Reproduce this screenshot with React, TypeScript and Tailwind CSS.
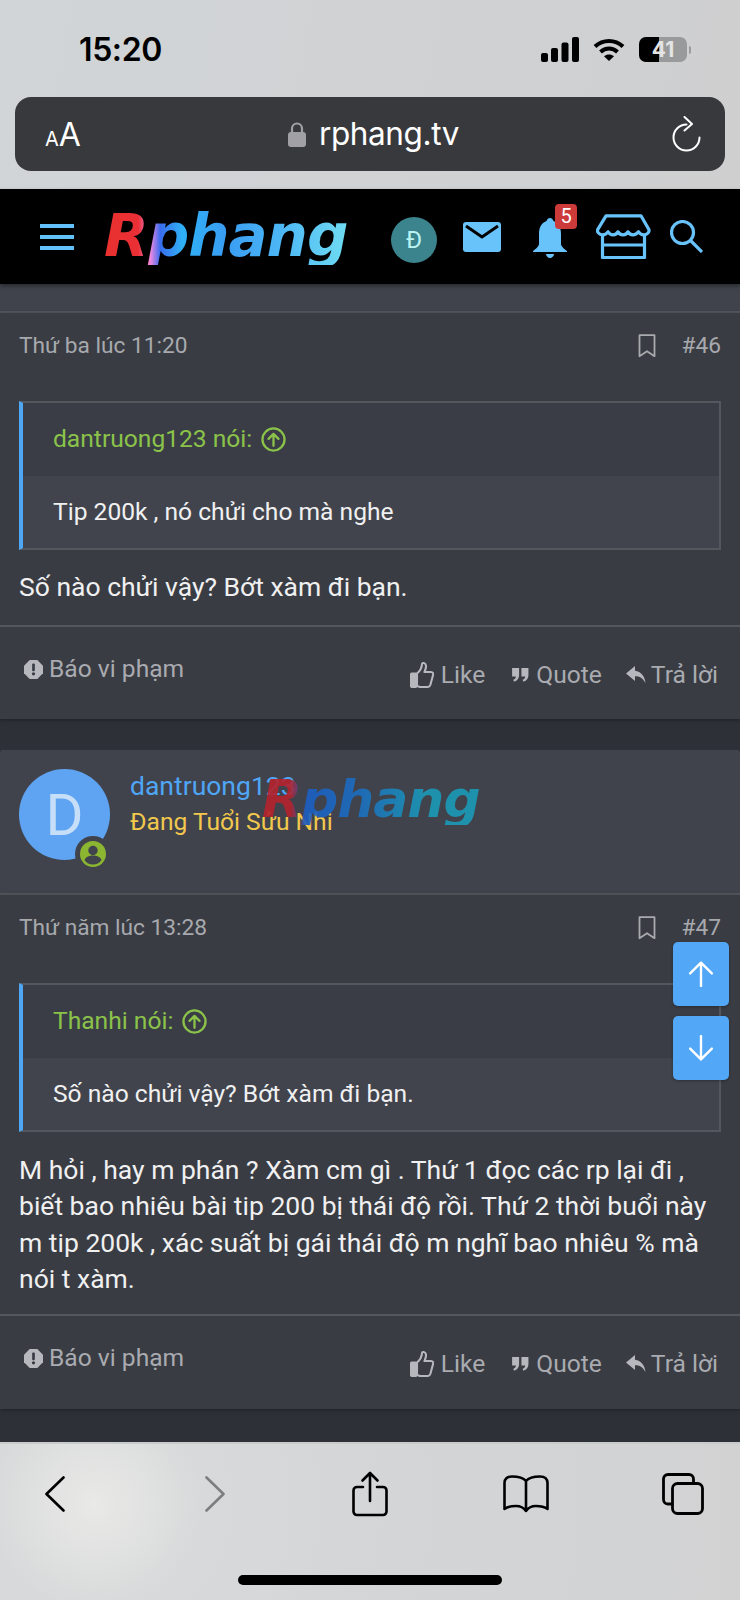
import React from "react";

function Logo({ dim }: { dim?: boolean }) {
  return (
    <span
      className={
        "block whitespace-nowrap font-['DejaVu_Sans',sans-serif] font-bold italic leading-none bg-clip-text text-transparent " +
        (dim
          ? "text-[52px] tracking-[-1px] bg-[linear-gradient(90deg,#b5222c_0%,#b5222c_13%,#1c5fc4_20%,#1c6fc0_45%,#1b9ab8_75%,#1b9ab8_100%)]"
          : "text-[58px] tracking-[-1px] bg-[linear-gradient(90deg,#e9312f_0%,#ea2f35_14%,#f08ae0_19%,#3a6cf0_23%,#2fb0f5_32%,#3a9df2_50%,#4ab4f5_70%,#6fdcf2_100%)]")
      }
    >
      Rphang
    </span>
  );
}

function QuoteCircle({ className }: { className?: string }) {
  return (
    <svg viewBox="0 0 24 24" className={className} fill="none" stroke="currentColor" strokeWidth="2.2" strokeLinecap="round" strokeLinejoin="round">
      <circle cx="12" cy="12" r="10.6" />
      <path d="M12 18V6.8M7.2 11.4 12 6.6l4.8 4.8" />
    </svg>
  );
}

function Bookmark() {
  return (
    <svg viewBox="0 0 18 24" className="w-[18px] h-[24px] text-[#a9aaae]" fill="none" stroke="currentColor" strokeWidth="1.8" strokeLinejoin="round">
      <path d="M1.5 1.2h15v21L9 17.2l-7.5 5z" />
    </svg>
  );
}

function Meta({ date, num }: { date: string; num: string }) {
  return (
    <div className="h-[66px] px-[19px] flex items-center justify-between text-[22.7px] text-[#a7a9ad]">
      <span>{date}</span>
      <div className="flex items-center">
        <Bookmark />
        <span className="ml-[26px]">{num}</span>
      </div>
    </div>
  );
}

function Quote({ author, text }: { author: string; text: string }) {
  return (
    <div className="mx-[19px] mt-[22px] h-[149px] border-2 border-l-4 border-[#54575d] border-l-[#4fa6f5] flex flex-col">
      <div className="h-[73px] bg-[#3a3d45] pl-[30px] flex items-center gap-[9px] text-[24.6px] text-[#8bc34a]">
        <span>{author} nói:</span>
        <QuoteCircle className="w-[25px] h-[25px]" />
      </div>
      <div className="flex-1 bg-[#41444c] pl-[30px] flex items-center text-[24.6px] text-[#f0f0f1]">{text}</div>
    </div>
  );
}

function ActionBar({ h }: { h: string }) {
  return (
    <div className={"border-t-2 border-[#54575d] px-[24px] flex justify-between text-[#a9abb0] text-[24.6px] " + h}>
      <div className="flex items-center gap-[6px] h-[84px]">
        <svg viewBox="0 0 20 20" className="w-[19px] h-[19px]" fill="#b6b8bd">
          <path d="M6 0h8l6 6v8l-6 6H6l-6-6V6z" />
          <rect x="8.6" y="3.8" width="2.8" height="8" rx="1" fill="#383b43" />
          <circle cx="10" cy="14.6" r="1.7" fill="#383b43" />
        </svg>
        <span>Báo vi phạm</span>
      </div>
      <div className="flex items-center h-[96px] mr-[-2px]">
        <svg viewBox="0 0 24 26" className="w-[24px] h-[26px]" fill="none" stroke="#b6b8bd" strokeWidth="2.1" strokeLinejoin="round">
          <path d="M7 11.5c3-2.5 4.8-5.5 5-9.5 0-1.5 3.6-1.6 4 1.6.3 2.4-.8 4.5-1.6 6.4H21c1.9 0 2.7 1.8 2 3.3l-2.6 9.4c-.5 1.6-1.6 2.3-3 2.3H10.5C9 25 7 24 7 23z" />
          <rect x="1" y="11.5" width="5.6" height="13.5" rx="1" fill="#b6b8bd" />
        </svg>
        <span className="ml-[7px]">Like</span>
        <svg viewBox="0 0 18 15" className="w-[17px] h-[14px] ml-[27px]" fill="#b6b8bd">
          <path d="M0 0h7.5v7.5C7.5 11.5 5 14 2 14.6l-.7-2C3 12 4 10.800 4 9H0zM10 0h7.500v7.500c0 4-2.500 6.500-5.500 7.100l-.7-2C13 12 14 10.800 14 9h-4z" />
        </svg>
        <span className="ml-[7px]">Quote</span>
        <svg viewBox="0 0 20 18" className="w-[20px] h-[18px] ml-[24px]" fill="#b6b8bd">
          <path d="M9 0 0 7.500 9 15v-4.800c4.500 0 8 1.800 10.500 7C19 10.500 15 5.500 9 4.800z" />
        </svg>
        <span className="ml-[5px]">Trả lời</span>
      </div>
    </div>
  );
}

export default function App() {
  return (
    <div className="relative w-[740px] h-[1600px] overflow-hidden flex flex-col bg-[#2d3037] font-['Roboto',sans-serif]">
      {/* Safari top */}
      <div className="h-[189px] shrink-0 bg-[linear-gradient(100deg,#d1d5d7,#cfcfd0)] flex flex-col">
        <div className="h-[97px] flex items-center justify-between pl-[79px] pr-[49px] pt-[2px]">
          <span className="font-['Inter',sans-serif] font-semibold text-[32px] text-black tracking-[-0.4px]">15:20</span>
          <div className="flex items-center">
            <svg viewBox="0 0 38 25" className="w-[38px] h-[25px]" fill="#000">
              <rect x="0" y="16" width="7" height="9" rx="2" />
              <rect x="10" y="11" width="7" height="14" rx="2" />
              <rect x="20.500" y="5.500" width="7" height="19.500" rx="2" />
              <rect x="31" y="0" width="7" height="25" rx="2" />
            </svg>
            <svg viewBox="0 0 32 24" className="w-[32px] h-[24px] ml-[14px]" fill="none" stroke="#000" strokeWidth="4">
              <path d="M2 8.500c8-7.500 20-7.500 28 0" />
              <path d="M7.500 14c5-4.600 12-4.600 17 0" />
              <path d="M16 23l-5-4.800c3-2.400 7-2.400 10 0z" fill="#000" stroke="none" />
            </svg>
            <div className="relative ml-[14px] w-[48px] h-[25px] rounded-[7px] overflow-hidden bg-[#999a9b] flex">
              <div className="w-[20px] bg-black" />
              <span className="absolute inset-0 flex items-center justify-center font-['Inter',sans-serif] font-bold text-[21px] text-[#e4e4e4]">41</span>
            </div>
            <div className="ml-[2px] w-[2px] h-[8px] rounded-r bg-[#9a9a9b]" />
          </div>
        </div>
        <div className="mx-[15px] h-[74px] rounded-[16px] bg-[#38393c] flex items-center pl-[30px]">
          <div className="flex items-baseline font-['Inter',sans-serif] text-white leading-none w-[243px] pt-[1px]">
            <span className="text-[20px]">A</span>
            <span className="text-[32px]">A</span>
          </div>
          <div className="flex items-center gap-[13px]">
            <svg viewBox="0 0 18 25" className="w-[18px] h-[25px]" fill="#a1a1a5">
              <rect x="0" y="10" width="18" height="15" rx="3" />
              <path d="M4 11V6.500a5 5 0 0 1 10 0V11" fill="none" stroke="#a1a1a5" strokeWidth="2.200" />
            </svg>
            <span className="text-[31.500px] text-white font-['Inter',sans-serif] leading-none tracking-[-0.4px]">rphang.tv</span>
          </div>
          <svg viewBox="0 0 30 36" className="ml-[212px] w-[30px] h-[36px]" fill="none" stroke="#fff" strokeWidth="2" strokeLinecap="round" strokeLinejoin="round">
            <path d="M15.500 8.500A13 13 0 1 0 28.500 21.500" />
            <path d="M13.500 1 21 8l-7.500 6.500" />
          </svg>
        </div>
      </div>

      {/* Site nav */}
      <div className="h-[95px] shrink-0 bg-black flex items-center relative z-10 shadow-[0_2px_4px_rgba(0,0,0,0.4)]">
        <div className="ml-[40px] w-[34px] flex flex-col gap-[7px]">
          <div className="h-[4px] bg-[#62c1fb]" />
          <div className="h-[4px] bg-[#62c1fb]" />
          <div className="h-[4px] bg-[#62c1fb]" />
        </div>
        <div className="ml-[30px] w-[244px] pb-[2px]">
          <Logo />
        </div>
        <div className="ml-[43px] w-[46px] h-[46px] rounded-full bg-[#3b838d] flex items-center justify-center text-[#b9f4f2] text-[24px] mt-[6px]">Đ</div>
        <svg viewBox="0 0 38 30" className="ml-[26px] w-[38px] h-[30px]">
          <rect width="38" height="30" rx="3" fill="#69c3fb" />
          <path d="M3 4l16 11L35 4" fill="none" stroke="#000" strokeWidth="3" />
        </svg>
        <div className="relative ml-[32px] w-[34px] h-[40px] mt-[2px]">
          <svg viewBox="0 0 34 40" className="w-[34px] h-[40px]" fill="#69c3fb">
            <path d="M17 0c2 0 3 1.500 3.500 3C26 5 28 10 28 16v10c0 2 3 5 6 7v1H0v-1c3-2 6-5 6-7V16C6 10 8 5 13.500 3 14 1.500 15 0 17 0z" />
            <path d="M13 36h8c0 2-2 4-4 4s-4-2-4-4z" />
          </svg>
          <div className="absolute left-[22px] top-[-14px] w-[22px] h-[25px] rounded-[4px] bg-[#cd3a3a] flex items-center justify-center text-white text-[20px] leading-none">5</div>
        </div>
        <svg viewBox="0 0 55 45" className="ml-[29px] w-[55px] h-[45px]" fill="none" stroke="#69c3fb" strokeWidth="3.200" strokeLinejoin="round">
          <path d="M10 1.800h35l8 14c.5 2-1.500 5-5 5-3 0-4.500-1.500-5.500-3-1.500 2-3.500 3-5.500 3s-4-1-5-3c-1 2-3 3-5 3s-4-1-5-3c-1 2-3 3-5 3s-4-1.500-5-3c-1 1.500-2.500 3-5.500 3-3.500 0-5.500-3-5-5z" />
          <path d="M6.500 21v22.500h42V21M6.500 31h42" />
        </svg>
        <svg viewBox="0 0 33 33" className="ml-[19px] w-[33px] h-[33px]" fill="none" stroke="#69c3fb" strokeWidth="3.200">
          <circle cx="12.500" cy="12.500" r="11" />
          <path d="M20.500 20.500 32 32" />
        </svg>
      </div>

      {/* Thread */}
      <div className="flex-1 flex flex-col min-h-0 text-[#f0f0f1]">
        <div className="h-[29px] shrink-0 bg-[#40434c] border-b-2 border-[#54575d]" />
        <div className="bg-[#393c43] h-[406px] shrink-0 shadow-[0_1px_4px_rgba(0,0,0,0.35)]">
          <Meta date="Thứ ba lúc 11:20" num="#46" />
          <Quote author="dantruong123" text="Tip 200k , nó chửi cho mà nghe" />
          <p className="px-[19px] mt-[19px] mb-[20px] text-[26.500px] leading-[36px]">Số nào chửi vậy? Bớt xàm đi bạn.</p>
          <ActionBar h="h-[94px]" />
        </div>
        <div className="mt-[31px] bg-[#40434c] h-[145px] shrink-0 border-b-2 border-[#54575d] flex pl-[19px] pt-[19px] gap-[20px] rounded-t-[3px]">
          <div className="relative w-[91px] h-[91px] rounded-full bg-[#5ea4f2] flex items-center justify-center text-[#c6def8] text-[58px] leading-none">
            D
            <div className="absolute left-[56px] top-[67px] w-[36px] h-[36px] rounded-full bg-[#40434c] flex items-center justify-center">
              <svg viewBox="0 0 26 26" className="w-[26px] h-[26px]">
                <circle cx="13" cy="13" r="13" fill="#8cb531" />
                <circle cx="13" cy="9.500" r="4.700" fill="#40434c" />
                <path d="M4.500 19c1.500-3.500 5-4.500 8.500-4.500s7 1 8.500 4.500c-2 3-5 4.500-8.500 4.500S6.500 22 4.500 19z" fill="#40434c" />
              </svg>
            </div>
          </div>
          <div className="flex flex-col leading-[36px] mt-[-1px]">
            <span className="text-[#4fa6f5] text-[26.500px]">dantruong123</span>
            <span className="text-[#f2c94c] text-[24.600px]">Đang Tuổi Sửu Nhi</span>
          </div>
        </div>
        <div className="bg-[#393c43] h-[514px] shrink-0 shadow-[0_1px_4px_rgba(0,0,0,0.35)]">
          <Meta date="Thứ năm lúc 13:28" num="#47" />
          <Quote author="Thanhi" text="Số nào chửi vậy? Bớt xàm đi bạn." />
          <p className="px-[19px] mt-[20px] mb-[17px] text-[26.500px] leading-[36.300px]">
            M hỏi , hay m phán ? Xàm cm gì . Thứ 1 đọc các rp lại đi , biết bao nhiêu bài tip 200 bị thái độ rồi. Thứ 2 thời buổi này m tip 200k , xác suất bị gái thái độ m nghĩ bao nhiêu % mà nói t xàm.
          </p>
          <ActionBar h="h-[96px]" />
        </div>
      </div>

      {/* Safari bottom */}
      <div className="h-[158px] shrink-0 border-t-2 border-[#c9cacb] bg-[radial-gradient(circle_at_95px_60px,#e9e9e7_0,#d7d9da_110px,#d3d5d7_300px,#d2d2d3_100%)] flex flex-col items-center relative z-10">
        <div className="w-full h-[80px] mt-[10px] pl-[45px] flex items-center">
          <svg viewBox="0 0 20 36" className="w-[20px] h-[36px]" fill="none" stroke="#000" strokeWidth="2.600" strokeLinecap="round" strokeLinejoin="round">
            <path d="M18.500 1.500 1.500 18l17 16.500" />
          </svg>
          <svg viewBox="0 0 20 36" className="ml-[140px] w-[20px] h-[36px]" fill="none" stroke="#7d7e80" strokeWidth="2.600" strokeLinecap="round" strokeLinejoin="round">
            <path d="M1.500 1.500 18.500 18l-17 16.500" />
          </svg>
          <svg viewBox="0 0 36 46" className="ml-[127px] w-[36px] h-[46px]" fill="none" stroke="#000" strokeWidth="2.600" strokeLinecap="round" strokeLinejoin="round">
            <path d="M11 16H5a3.500 3.500 0 0 0-3.500 3.500v21A3.500 3.500 0 0 0 5 44h26a3.500 3.500 0 0 0 3.500-3.500v-21A3.500 3.500 0 0 0 31 16h-6" />
            <path d="M18 30V2M10.500 9.500 18 2l7.500 7.500" />
          </svg>
          <svg viewBox="0 0 46 38" className="ml-[115px] w-[46px] h-[38px]" fill="none" stroke="#000" strokeWidth="2.600" strokeLinecap="round" strokeLinejoin="round">
            <path d="M23 6C20 2.500 15 1.500 9 1.500 4 1.500 1.500 4 1.500 8v26C5 31.500 9 31 13 31c4.500 0 8 2 10 5 2-3 5.500-5 10-5 4 0 8 .5 11.500 3V8c0-4-2.500-6.500-7.500-6.500C31 1.500 26 2.500 23 6zM23 6v30" />
          </svg>
          <svg viewBox="0 0 42 42" className="ml-[113px] w-[42px] h-[42px]" fill="none" stroke="#000" strokeWidth="2.800" strokeLinejoin="round">
            <path d="M10 31H6a4.500 4.500 0 0 1-4.500-4.500V6A4.500 4.500 0 0 1 6 1.500h21A4.500 4.500 0 0 1 31.500 6v4" />
            <rect x="10.500" y="10.500" width="30" height="30" rx="5" />
          </svg>
        </div>
        <div className="mt-[41px] w-[264px] h-[10px] rounded-full bg-black" />
      </div>

      {/* Overlays */}
      <div className="absolute left-[262px] top-[773px] z-20 pointer-events-none opacity-90">
        <Logo dim />
      </div>
      <div className="absolute left-[673px] top-[942px] z-20 flex flex-col gap-[10px]">
        <div className="w-[56px] h-[64px] rounded-[5px] bg-[#52a7f7] shadow-[0_1px_3px_rgba(0,0,0,0.3)] flex items-center justify-center">
          <svg viewBox="0 0 24 24" className="w-[26px] h-[26px]" fill="none" stroke="#fff" strokeWidth="2.200" strokeLinecap="round" strokeLinejoin="round">
            <path d="M12 23V1.500M2 11.500l10-10 10 10" />
          </svg>
        </div>
        <div className="w-[56px] h-[64px] rounded-[5px] bg-[#52a7f7] shadow-[0_1px_3px_rgba(0,0,0,0.3)] flex items-center justify-center">
          <svg viewBox="0 0 24 24" className="w-[26px] h-[26px]" fill="none" stroke="#fff" strokeWidth="2.200" strokeLinecap="round" strokeLinejoin="round">
            <path d="M12 1v21.500M2 12.500l10 10 10-10" />
          </svg>
        </div>
      </div>
    </div>
  );
}
